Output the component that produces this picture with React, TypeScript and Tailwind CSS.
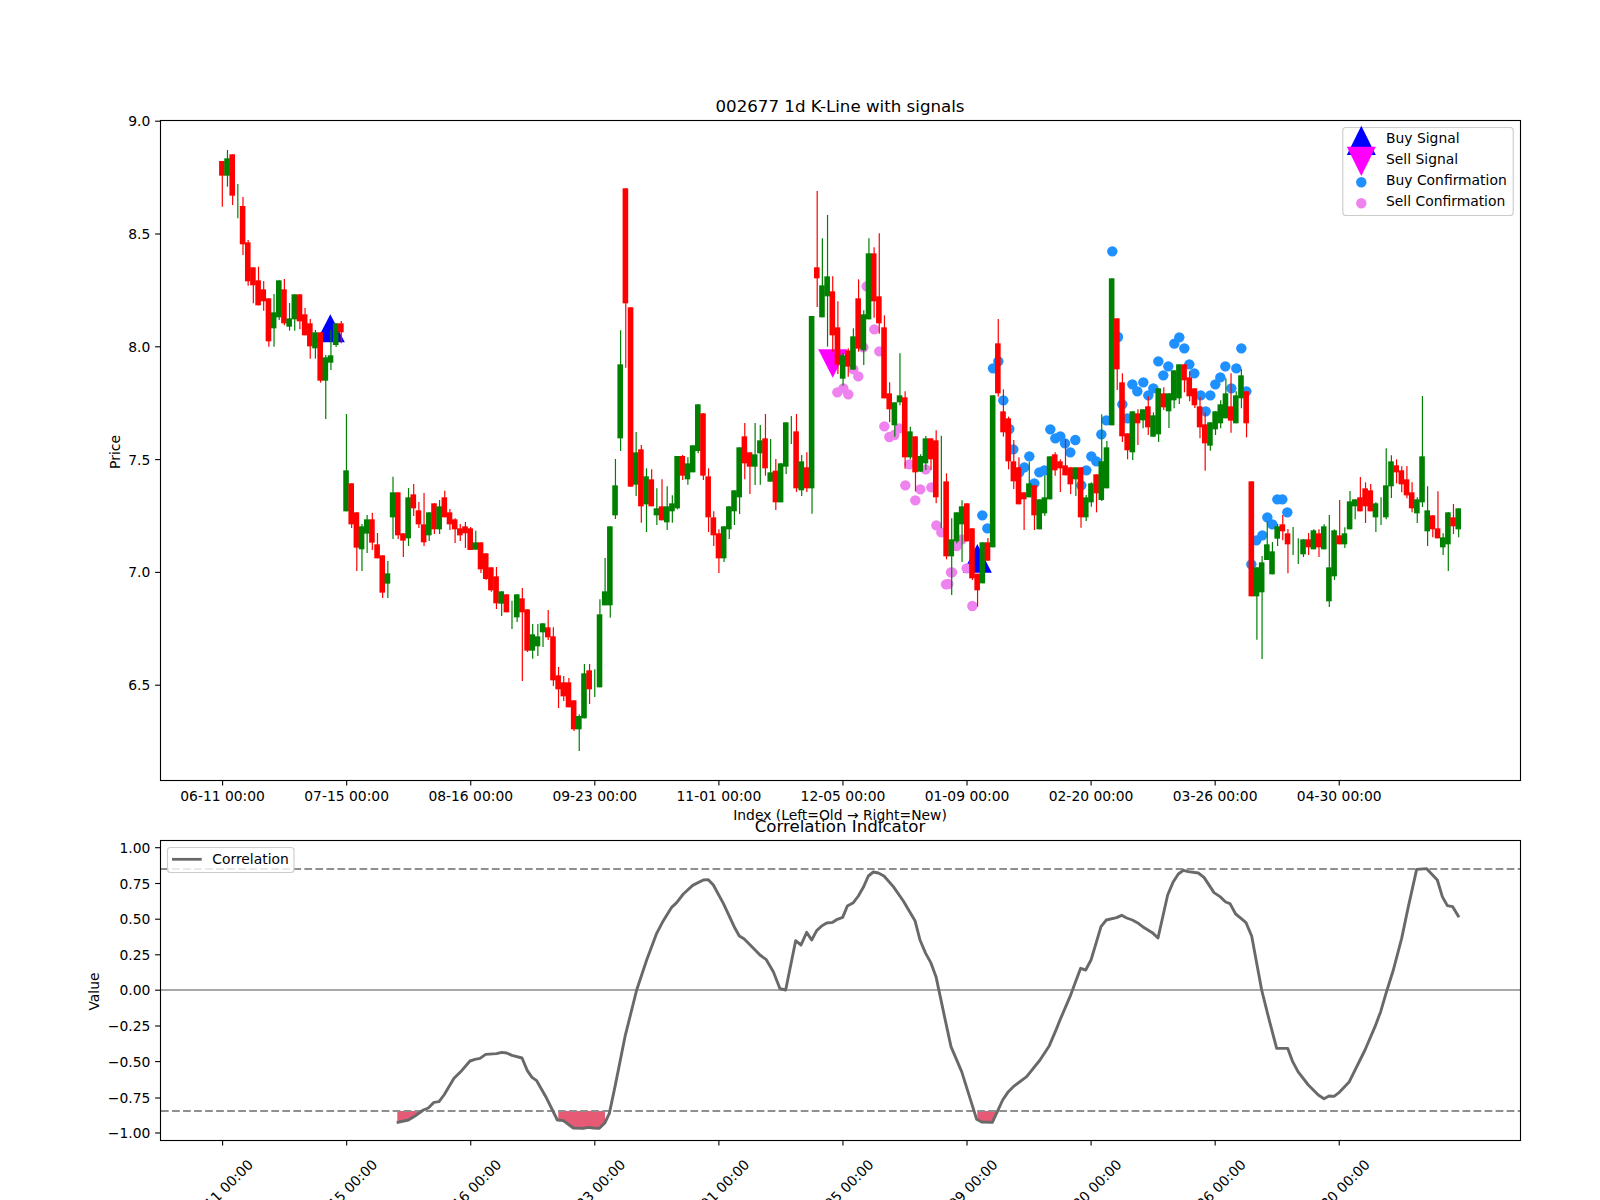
import React from "react";

type Row = [number, number, number, number, number, number];
type Group = { ox: number; oy: number; rows: Row[] };

// rows: [wick x, red?, wick top, body top, body bottom, wick bottom]; all in 3x crop units
const G: Group[] = [
  { ox: 150, oy: 100, rows: [
    [217,1,183,183,227,320],[232,0,150,175,227,260],[247,1,163,163,287,315],[262,0,252,0,0,355],[280,1,291,318,433,465],
    [295,1,420,427,544,557],[310,1,502,502,556,610],[325,1,500,541,616,616],[340,1,543,568,604,632],[355,1,595,595,724,740],
    [373,0,582,637,685,740],[388,0,541,541,652,660],[403,1,537,568,670,676],[418,0,609,655,680,692],[433,0,583,583,658,692],
    [448,1,583,583,664,688],[465,1,624,643,706,706],[481,1,657,670,739,776],[496,0,690,697,745,776],[510,1,697,697,842,848],
    [526,0,765,772,842,957],[541,0,690,766,788,810],[559,0,670,670,735,741],[574,1,663,670,697,730],
  ]},
  { ox: 150, oy: 400, rows: [
    [589,0,42,211,334,334],[604,1,250,250,373,384],[619,1,337,337,443,513],[634,0,372,379,448,513],[652,0,345,358,401,459],
    [667,1,338,358,428,450],[682,1,399,433,475,475],[697,1,466,466,578,594],[712,0,483,520,551,594],[730,0,230,277,352,417],
    [745,1,277,277,406,417],[760,1,400,400,422,471],[775,0,264,292,415,438],[790,1,252,283,325,348],[805,1,306,331,373,384],
    [823,1,279,373,427,438],[838,0,337,337,406,423],[853,1,310,310,388,402],[868,0,300,319,388,402],[883,1,272,292,352,352],
    [898,1,327,337,373,390],[915,1,355,358,388,429],[930,1,372,385,406,423],[945,1,366,379,400,444],[960,1,381,385,450,450],
    [975,0,392,427,449,449],[990,1,427,427,508,519],[1008,1,460,460,537,540],[1023,1,502,502,571,575],[1038,1,501,529,610,627],
    [1053,0,574,574,611,648],[1068,1,583,583,637,637],[1087,0,602,0,0,687],[1102,0,583,583,652,666],[1117,1,564,595,637,843],
    [1132,1,628,628,752,756],[1147,0,672,703,752,776],[1162,0,672,709,739,768],[1180,0,670,670,697,741],[1195,1,630,682,712,720],
  ]},
  { ox: 550, oy: 470, rows: [
    [10,1,472,499,631,648],[25,1,591,616,658,714],[40,1,618,637,679,693],[55,1,624,637,712,712],[73,1,691,691,778,783],
    [88,0,733,738,778,843],[103,0,582,610,745,745],[118,1,582,601,658,702],[133,0,598,0,0,681],[148,0,388,433,652,652],
    [166,0,264,364,406,406],[181,0,169,169,406,443],
  ]},
  { ox: 550, oy: 170, rows: [
    [196,0,867,946,1036,1047],[211,0,481,583,805,843],[226,1,55,55,400,593],[241,1,412,412,950,950],[256,0,786,847,944,978],
    [271,1,825,838,1009,1058],[289,0,895,919,1003,1086],[304,1,898,928,1009,1009],[319,0,955,1015,1036,1065],[337,1,928,1009,1051,1051],
    [352,0,949,1009,1057,1080],[367,0,976,1000,1024,1058],[382,0,858,858,1015,1018],[397,1,855,858,917,930],[412,0,862,880,928,944],
    [430,0,826,826,907,907],[445,0,703,703,843,850],[460,1,730,730,917,930],[475,1,895,919,1042,1086],[490,1,1024,1042,1096,1128],
    [505,1,1078,1090,1165,1209],[523,0,1069,1069,1165,1176],[538,0,1009,1009,1078,1107],[553,0,961,961,1024,1065],[568,0,832,832,982,1032],
    [583,1,759,799,880,928],[598,1,847,847,890,972],[616,0,759,853,890,945],[631,0,765,811,850,944],[646,1,732,805,895,917],
    [661,0,807,907,935,935],[676,1,867,902,997,1020],[694,0,880,880,997,997],[709,0,757,757,890,912],[724,0,738,0,0,822],
    [739,1,732,784,955,966],[754,0,855,874,961,978],[769,1,847,892,955,966],[787,0,438,438,955,1031],[802,1,63,292,325,411],
    [817,0,205,346,442,442],[832,0,135,319,379,530],[847,1,319,364,496,545],[862,1,394,472,584,612],[880,0,550,556,626,647],
    [895,1,535,541,590,620],[910,0,475,499,599,599],[925,1,328,385,536,545],[940,0,421,433,541,585],[955,0,205,250,448,448],
    [973,1,232,250,394,443],[988,1,190,379,460,491],[1003,1,436,472,685,685],[1018,1,637,670,718,757],[1033,0,697,697,766,800],
    [1048,0,550,676,697,706],[1066,1,664,682,862,896],[1081,0,770,784,862,868],[1096,1,799,799,907,964],[1111,0,853,858,905,905],
    [1126,0,798,805,880,900],[1141,1,805,805,868,900],[1159,1,781,811,982,1000],[1174,0,797,0,0,1075],[1189,1,910,934,1159,1168],
  ]},
  { ox: 950, oy: 440, rows: [
    [4,0,235,298,349,465],[19,0,217,217,304,310],[37,0,181,199,253,366],[52,1,190,190,304,304],[67,1,265,265,415,420],
    [82,1,401,401,451,500],[97,0,307,307,430,430],[112,1,294,307,362,362],[130,0,-134,-134,322,322],
    [145,1,-363,-290,-140,-130],[160,1,-152,-86,-23,-10],[175,1,-70,-65,64,88],[190,1,0,64,124,147],[205,1,52,82,193,193],
    [223,1,157,157,178,270],[238,0,65,130,172,172],[253,1,136,136,226,270],[268,0,178,178,268,268],[283,0,106,172,220,228],
    [298,0,49,49,178,178],[316,1,37,43,91,107],[331,1,58,64,85,156],[346,1,-2,76,106,106],[361,1,82,82,133,162],
    [376,0,82,82,118,168],[394,1,82,82,232,263],[409,0,165,172,232,243],[424,0,127,130,187,200],[439,1,103,103,160,217],
    [454,0,-77,64,180,183],[469,0,3,22,145,145],
  ]},
  { ox: 950, oy: 220, rows: [
    [487,0,175,175,616,616],[502,1,295,295,448,510],[517,1,460,487,649,666],[532,1,640,640,691,718],[547,0,574,574,697,720],
    [562,1,568,580,610,675],[580,0,568,568,601,625],[595,1,529,559,622,645],[610,0,577,586,650,650],[625,0,505,505,643,666],
    [640,1,502,520,562,570],[655,0,520,520,574,624],[673,0,451,451,541,565],[688,0,433,433,535,552],[703,1,433,433,481,517],
    [718,1,454,472,529,544],[733,1,505,505,556,564],[751,1,530,559,622,655],[766,1,577,613,670,752],[781,0,607,607,677,692],
    [796,0,574,574,628,645],[811,0,541,553,610,625],[826,0,475,520,595,595],[841,1,460,559,602,638],[859,0,514,526,610,610],
    [874,0,448,466,535,565],[889,1,514,514,610,652],
  ]},
  { ox: 1200, oy: 340, rows: [
    [154,1,424,424,769,769],[169,0,682,682,769,899],[187,0,648,667,757,957],[202,0,545,613,660,660],[217,0,606,634,703,703],
    [232,0,552,559,596,618],[247,1,525,553,574,601],[262,1,567,580,613,700],[280,0,561,0,0,645],[295,0,595,0,0,672],
    [310,0,598,598,643,651],[325,1,579,598,622,645],[340,0,568,571,628,628],[355,1,568,580,622,651],[370,0,553,559,628,628],
    [388,0,525,682,784,801],[403,0,568,571,709,720],[418,1,480,586,613,613],[433,0,562,580,613,624],[451,0,453,484,568,568],
    [466,0,478,478,499,538],[481,1,411,472,514,514],[496,1,427,445,499,549],[511,1,432,451,514,514],[526,0,487,490,532,576],
    [544,0,472,0,0,555],[559,0,325,436,532,538],[574,0,346,364,439,474],[589,1,358,376,397,430],[604,1,379,391,433,457],
    [619,1,378,418,466,475],[636,1,427,457,505,517],[651,0,472,478,520,549],[666,0,168,349,487,501],[682,0,439,511,574,618],
    [697,1,526,526,568,592],[712,1,454,565,595,595],[729,0,580,592,622,645],[745,0,517,517,613,693],[760,1,492,532,559,582],
    [775,0,505,505,568,592],
  ]},
];

const candles = G.flatMap((g) =>
  g.rows.map(([x, red, wt, bt, bb, wb]) => {
    const real = g.ox + x / 3;
    const idx = Math.round((real - 222.3) / 5.173);
    return {
      cx: 222.3 + 5.173 * idx,
      color: red ? "#ff0000" : "#008000",
      wt: g.oy + wt / 3,
      wb: g.oy + wb / 3,
      bt: g.oy + bt / 3,
      bb: g.oy + bb / 3,
      hasBody: bb > bt,
    };
  })
);

const pts = (ox: number, oy: number, a: number[][]) => a.map(([x, y]) => [ox + x / 3, oy + y / 3]);

const violet = [
  ...pts(550, 170, [[862,667],[880,655],[895,673],[910,598],[925,619],[940,532],[988,544],[973,478],[950,349],[1003,769],[1018,801],[1033,795],[1048,775],[1078,883],[1127,898]]),
  ...pts(550, 470, [[1066,46],[1096,91],[1111,58],[1144,52],[1159,166],[1174,187],[1203,307],[1188,343]]),
  ...pts(950, 440, [[6,397],[20,318],[36,298],[50,385],[67,498],[-5,432]]),
];

const blue = [
  ...pts(950, 220, [[129,445],[145,424],[160,541],[178,627],[301,628],[316,655],[331,649],[345,670],[376,660],[454,643],[469,601],[487,94],[504,351],[517,553],[532,595],[547,493],[562,514],[580,487],[595,526],[610,505],[625,424],[640,466],[655,439],[673,371],[688,352],[703,385],[718,433],[733,460],[752,526],[767,574],[781,526],[796,493],[811,472],[826,439],[844,505],[859,445],[874,385],[889,514]]),
  ...pts(950, 440, [[97,226],[112,265],[190,28],[238,49],[223,82],[208,97],[268,97],[283,91],[253,130],[361,37],[424,49],[439,64],[409,91],[394,136]]),
  ...pts(1200, 340, [[154,673],[169,601],[187,586],[202,532],[217,553],[232,478],[247,478],[262,517]]),
];

const curve = [
  ...pts(80, 770, [[950,1058],[985,1050],[1005,1038],[1030,1020],[1045,1014],[1062,997],[1077,995],[1092,975],[1122,925],[1145,902],[1170,873],[1185,868],[1200,865],[1217,853],[1250,851],[1265,847],[1280,849],[1296,856],[1326,864],[1342,902],[1356,922],[1370,932],[1400,985],[1432,1050],[1450,1052],[1480,1074]]),
  ...pts(560, 800, [[70,985],[85,982],[100,984],[118,985],[135,968],[148,940],[165,860],[195,710],[230,570],[260,480],[290,400],[310,362],[335,322],[350,308],[370,282],[398,256],[430,240],[445,239],[460,255],[490,310],[525,385],[538,408],[552,416],[600,465],[618,478],[640,515],[660,566],[677,570],[707,422],[723,435],[740,397],[755,420],[770,392],[785,378],[800,369],[818,367],[832,358],[848,352],[862,318],[880,308],[895,288],[910,262],[925,228],[940,216],[955,219],[972,228],[1000,260],[1030,303],[1065,362],[1080,420],[1097,460],[1112,487],[1128,530],[1160,680],[1173,740],[1205,815],[1250,958],[1265,966],[1297,967],[1312,935],[1328,900],[1345,875],[1360,860],[1400,830],[1440,780],[1468,737],[1490,685]]),
  ...pts(1060, 800, [[0,660],[30,590],[45,550],[62,505],[77,510],[93,480],[108,430],[123,380],[139,360],[170,353],[185,346],[200,354],[217,360],[232,368],[248,380],[277,398],[294,414],[323,285],[339,247],[355,222],[370,211],[385,215],[415,219],[432,232],[462,278],[480,290],[497,306],[510,311],[527,342],[543,355],[558,368],[575,408],[605,570],[625,650],[650,745],[683,745],[698,785],[714,815],[745,855],[775,885],[792,896],[807,888],[822,889],[838,877],[868,845],[915,750],[945,680],[962,635],[978,580],[1000,510],[1025,415],[1045,320],[1070,208],[1100,206],[1132,240],[1147,290],[1162,317],[1178,320],[1197,352]]),
];

const curveAt = (x: number) => {
  for (let i = 1; i < curve.length; i++) {
    if (curve[i][0] >= x) {
      const [x0, y0] = curve[i - 1];
      const [x1, y1] = curve[i];
      return y0 + ((y1 - y0) * (x - x0)) / (x1 - x0);
    }
  }
  return curve[curve.length - 1][1];
};

const fillRegion = (a: number, b: number) => {
  const inner = curve.filter(([x]) => x > a && x < b);
  const p = [[a, 1111], [a, curveAt(a)], ...inner, [b, curveAt(b)], [b, 1111]];
  return p.map((q) => q.join(",")).join(" ");
};

const dates = ["06-11 00:00","07-15 00:00","08-16 00:00","09-23 00:00","11-01 00:00","12-05 00:00","01-09 00:00","02-20 00:00","03-26 00:00","04-30 00:00"];
const tickX = dates.map((_, i) => 222.6 + 124.07 * i);
const priceTicks = ["9.0","8.5","8.0","7.5","7.0","6.5"];
const corrTicks: [string, number][] = [["1.00",847.7],["0.75",883.5],["0.50",919.2],["0.25",954.8],["0.00",990.2],["\u22120.25",1026],["\u22120.50",1061.6],["\u22120.75",1098],["\u22121.00",1133]];

const T = "fill-black text-[13.89px]";

export default function App() {
  return (
    <div className="w-[1600px] h-[1200px] bg-white overflow-hidden">
      <svg
        viewBox="0 0 1600 1200"
        className="block w-[1600px] h-[1200px] font-['DejaVu_Sans',sans-serif]"
      >
        {/* price panel */}
        <polygon points="330.3,314.3 315.8,342.3 344.8,342.3" fill="#0000ff" />
        <polygon points="977.3,544 962.8,572.7 991.8,572.7" fill="#0000ff" />
        <polygon points="818.2,349.3 847.2,349.3 832.7,377.7" fill="#ff00ff" />
        {blue.map(([x, y], i) => <circle key={i} cx={x} cy={y} r={5.2} fill="#1e90ff" />)}
        {violet.map(([x, y], i) => <circle key={i} cx={x} cy={y} r={5.2} fill="#ee82ee" />)}
        {candles.filter((c) => c.hasBody).map((c, i) => (
          <rect key={i} x={c.cx - 3.2} y={c.bt} width={5.6} height={c.bb - c.bt} fill={c.color} />
        ))}
        {candles.map((c, i) => (
          <line key={i} x1={c.cx} x2={c.cx} y1={c.wt} y2={c.wb} stroke={c.color} strokeWidth={1.2} />
        ))}
        <rect x={160.5} y={120.5} width={1360} height={660} fill="none" stroke="#000" strokeWidth={1.11} />
        {priceTicks.map((t, i) => {
          const y = 121.2 + 112.8 * i;
          return (
            <g key={t}>
              <line x1={155.1} x2={160} y1={y} y2={y} stroke="#000" strokeWidth={1.11} />
              <text x={150.3} y={y + 5} textAnchor="end" className={T}>{t}</text>
            </g>
          );
        })}
        {dates.map((d, i) => (
          <g key={d}>
            <line x1={tickX[i]} x2={tickX[i]} y1={781} y2={785.4} stroke="#000" strokeWidth={1.11} />
            <text x={tickX[i]} y={801} textAnchor="middle" className={T}>{d}</text>
          </g>
        ))}
        <text x={840} y={112} textAnchor="middle" className="fill-black text-[16.67px]">002677 1d K-Line with signals</text>
        <text x={840} y={820} textAnchor="middle" className={T}>Index (Left=Old → Right=New)</text>
        <text transform="translate(120 452) rotate(-90)" textAnchor="middle" className={T}>Price</text>

        {/* price legend */}
        <rect x={1342.8} y={127.5} width={170.4} height={88} rx={3} fill="#fff" fillOpacity={0.8} stroke="#cccccc" strokeWidth={1.11} />
        <polygon points="1361.3,125.7 1346.8,155 1375.8,155" fill="#0000ff" />
        <polygon points="1346.8,146.7 1375.8,146.7 1361.3,176" fill="#ff00ff" />
        <circle cx={1361.3} cy={182.3} r={5.2} fill="#1e90ff" />
        <circle cx={1361.3} cy={203.3} r={5.2} fill="#ee82ee" />
        <text x={1386} y={143} className={T}>Buy Signal</text>
        <text x={1386} y={164} className={T}>Sell Signal</text>
        <text x={1386} y={185} className={T}>Buy Confirmation</text>
        <text x={1386} y={206} className={T}>Sell Confirmation</text>

        {/* correlation panel */}
        {[[397.3, 420.3], [558.3, 605], [977.3, 997.3]].map(([a, b]) => (
          <polygon key={a} points={fillRegion(a, b)} fill="#e65a76" />
        ))}
        <line x1={161} x2={1520} y1={990} y2={990} stroke="#a8a8a8" strokeWidth={2.08} />
        <line x1={161} x2={1520} y1={869} y2={869} stroke="#8f8f8f" strokeWidth={2.08} strokeDasharray="7.7 3.33" />
        <line x1={161} x2={1520} y1={1111} y2={1111} stroke="#8f8f8f" strokeWidth={2.08} strokeDasharray="7.7 3.33" />
        <polyline points={curve.map((q) => q.join(",")).join(" ")} fill="none" stroke="#696969" strokeWidth={2.9} strokeLinejoin="round" />
        <rect x={160.5} y={840.5} width={1360} height={300} fill="none" stroke="#000" strokeWidth={1.11} />
        {corrTicks.map(([t, y]) => (
          <g key={t}>
            <line x1={155.1} x2={160} y1={y} y2={y} stroke="#000" strokeWidth={1.11} />
            <text x={150.3} y={y + 5} textAnchor="end" className={T}>{t}</text>
          </g>
        ))}
        {dates.map((d, i) => (
          <g key={d}>
            <line x1={tickX[i]} x2={tickX[i]} y1={1141} y2={1145.4} stroke="#000" strokeWidth={1.11} />
            <text transform={`translate(${tickX[i] - 2} 1192) rotate(-45)`} y={5} textAnchor="middle" className={T}>{d}</text>
          </g>
        ))}
        <text x={840} y={832} textAnchor="middle" className="fill-black text-[16.67px]">Correlation Indicator</text>
        <text transform="translate(98.5 991.5) rotate(-90)" textAnchor="middle" className={T}>Value</text>

        {/* correlation legend */}
        <rect x={167.5} y={847.5} width={126.5} height={25} rx={3} fill="#fff" fillOpacity={0.8} stroke="#cccccc" strokeWidth={1.11} />
        <line x1={172} x2={201.7} y1={859.3} y2={859.3} stroke="#696969" strokeWidth={2.78} />
        <text x={212.3} y={864.3} className={T}>Correlation</text>
      </svg>
    </div>
  );
}
